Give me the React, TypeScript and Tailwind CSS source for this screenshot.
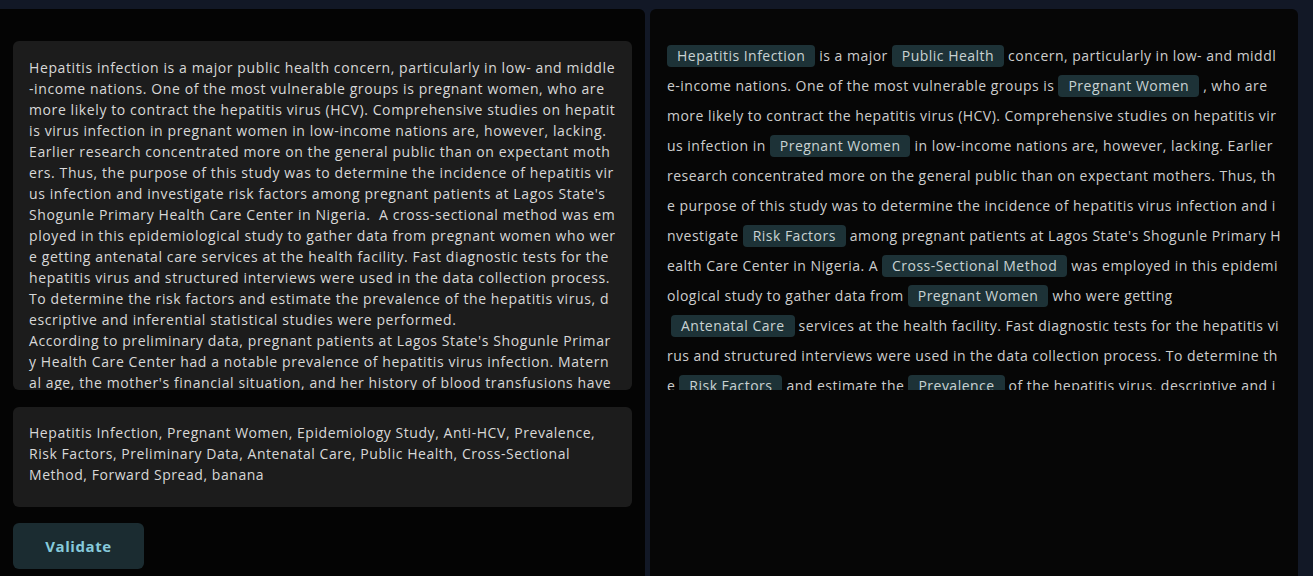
import { Fragment } from "react";

const abstractText =
  "Hepatitis infection is a major public health concern, particularly in low- and middle-income nations. One of the most vulnerable groups is pregnant women, who are more likely to contract the hepatitis virus (HCV). Comprehensive studies on hepatitis virus infection in pregnant women in low-income nations are, however, lacking. Earlier research concentrated more on the general public than on expectant mothers. Thus, the purpose of this study was to determine the incidence of hepatitis virus infection and investigate risk factors among pregnant patients at Lagos State's Shogunle Primary Health Care Center in Nigeria.  A cross-sectional method was employed in this epidemiological study to gather data from pregnant women who were getting antenatal care services at the health facility. Fast diagnostic tests for the hepatitis virus and structured interviews were used in the data collection process. To determine the risk factors and estimate the prevalence of the hepatitis virus, descriptive and inferential statistical studies were performed.\nAccording to preliminary data, pregnant patients at Lagos State's Shogunle Primary Health Care Center had a notable prevalence of hepatitis virus infection. Maternal age, the mother's financial situation, and her history of blood transfusions have all been found to be significant risk factors for hepatitis virus infection among the women studied.";

const keywords =
  "Hepatitis Infection, Pregnant Women, Epidemiology Study, Anti-HCV, Prevalence, Risk Factors, Preliminary Data, Antenatal Care, Public Health, Cross-Sectional Method, Forward Spread, banana";

// segments: strings are plain text, objects are highlighted keywords
type Segment = string | { tag: string };

const segments: Segment[] = [
  { tag: "Hepatitis Infection" },
  "is a major",
  { tag: "Public Health" },
  "concern, particularly in low- and middle-income nations. One of the most vulnerable groups is",
  { tag: "Pregnant Women" },
  ", who are more likely to contract the hepatitis virus (HCV). Comprehensive studies on hepatitis virus infection in",
  { tag: "Pregnant Women" },
  "in low-income nations are, however, lacking. Earlier research concentrated more on the general public than on expectant mothers. Thus, the purpose of this study was to determine the incidence of hepatitis virus infection and investigate",
  { tag: "Risk Factors" },
  "among pregnant patients at Lagos State's Shogunle Primary Health Care Center in Nigeria. A",
  { tag: "Cross-Sectional Method" },
  "was employed in this epidemiological study to gather data from",
  { tag: "Pregnant Women" },
  "who were getting",
  { tag: "Antenatal Care" },
  "services at the health facility. Fast diagnostic tests for the hepatitis virus and structured interviews were used in the data collection process. To determine the",
  { tag: "Risk Factors" },
  "and estimate the",
  { tag: "Prevalence" },
  "of the hepatitis virus, descriptive and inferential statistical studies were performed. According to preliminary data, pregnant patients at Lagos State's Shogunle Primary Health Care Center had a notable prevalence of hepatitis virus infection.",
];

export default function App() {
  return (
    <div className="flex h-[576px] gap-[5px] overflow-hidden bg-[#121826] pr-[15px] pt-[9px] font-['Open_Sans','Liberation_Sans',sans-serif] text-[14px] tracking-[0.6px]">
      {/* editor side */}
      <div className="flex w-[645px] shrink-0 flex-col rounded-tr-md bg-[#040404] px-[13px] pt-[32px]">
        <div className="h-[349px] overflow-hidden whitespace-pre-wrap break-all rounded-md bg-[#1c1c1c] px-4 py-4 leading-[21px] text-[#d8d8d8]">
          {abstractText}
        </div>
        <div className="mt-[17px] h-[100px] rounded-md bg-[#1c1c1c] px-4 pt-[15px] leading-[21px] tracking-[0.55px] text-[#d8d8d8]">
          {keywords}
        </div>
        <button
          type="button"
          className="mt-4 h-[46px] w-[131px] rounded-md bg-[#1b2c31] text-[15px] font-bold tracking-[0.6px] text-[#86cadb]"
        >
          Validate
        </button>
      </div>

      {/* preview side */}
      <div className="flex-1 rounded-t-md bg-[#060606] pl-[17px] pr-[16px] pt-[32px]">
        <div className="h-[349px] overflow-hidden break-all leading-[30px] tracking-[0.48px] text-[#cdcdcd]">
          {segments.map((seg, i) =>
            typeof seg === "string" ? (
              <Fragment key={i}>{seg}</Fragment>
            ) : (
              <span
                key={i}
                className="mx-1 inline-block break-normal rounded bg-[#1d3237] px-2.5 leading-[22px] text-[#c9d2d3] first:ml-0"
              >
                {seg.tag}
              </span>
            )
          )}
        </div>
      </div>
    </div>
  );
}
